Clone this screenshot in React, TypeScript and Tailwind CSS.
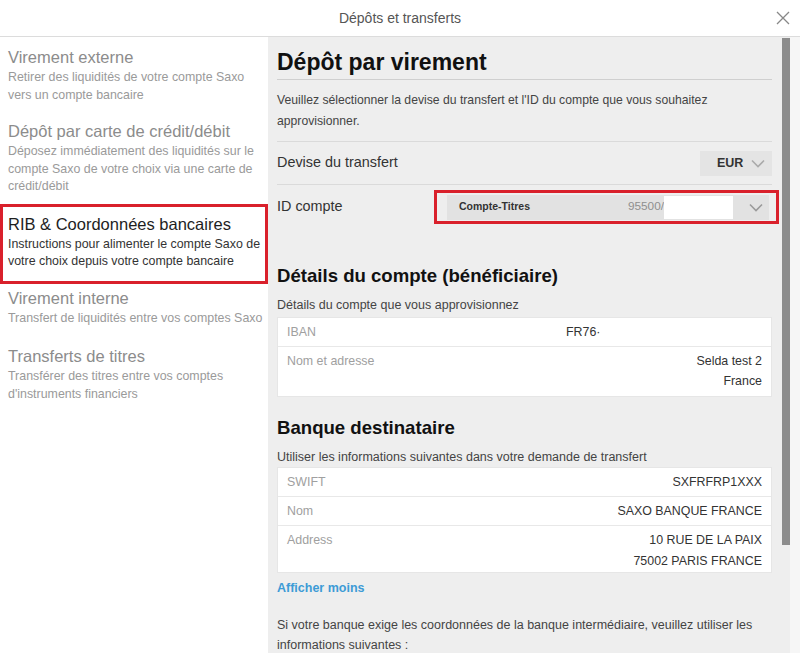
import React from "react";

const font = { fontFamily: '"Liberation Sans", Arial, Helvetica, sans-serif' };

function Chevron({ className = "" }: { className?: string }) {
  return (
    <svg width="14" height="9" viewBox="0 0 14 9" className={className}>
      <path d="M1 1.5 L7 7.5 L13 1.5" fill="none" stroke="currentColor" strokeWidth="1.6" />
    </svg>
  );
}

type Item = { title: string; desc: string[]; active?: boolean; cls: string };

const items: Item[] = [
  { title: "Virement externe", desc: ["Retirer des liquidités de votre compte Saxo", "vers un compte bancaire"], cls: "pt-[8px] pb-[8px]" },
  {
    title: "Dépôt par carte de crédit/débit",
    desc: ["Déposez immédiatement des liquidités sur le", "compte Saxo de votre choix via une carte de", "crédit/débit"],
    cls: "pt-[7px] pb-[8px]",
  },
  {
    title: "RIB & Coordonnées bancaires",
    desc: ["Instructions pour alimenter le compte Saxo de", "votre choix depuis votre compte bancaire"],
    active: true,
    cls: "pt-[5px] pb-[10px] border-[3px] border-[#d9202b] pl-[5px]",
  },
  { title: "Virement interne", desc: ["Transfert de liquidités entre vos comptes Saxo"], cls: "pt-[2px] pb-[8px]" },
  { title: "Transferts de titres", desc: ["Transférer des titres entre vos comptes", "d'instruments financiers"], cls: "pt-[9px] pb-[8px]" },
];

function Sidebar() {
  return (
    <div className="w-[268px] shrink-0 bg-white">
      {items.map((it) => (
        <div key={it.title} className={`${it.active ? "" : "pl-[8px]"} ${it.cls}`}>
          <div className={`whitespace-nowrap text-[16.5px] leading-[24px] ${it.active ? "text-[#1e1e1e]" : "text-[#8c8c8c]"}`}>{it.title}</div>
          <div className={`whitespace-nowrap text-[12.4px] leading-[17.5px] ${it.active ? "text-[#333]" : "text-[#9a9a9a]"}`}>
            {it.desc.map((d) => (
              <div key={d}>{d}</div>
            ))}
          </div>
        </div>
      ))}
    </div>
  );
}

function Row({
  label,
  values,
  last,
  mid,
  pb = "pb-[4px]",
  lh = "leading-[20px]",
}: {
  label: string;
  values: string[];
  last?: boolean;
  mid?: boolean;
  pb?: string;
  lh?: string;
}) {
  return (
    <div className={`flex px-[9px] pt-[4px] ${pb} text-[12.4px] ${lh} ${last ? "" : "border-b border-[#e8e8e8]"}`}>
      <div className={`text-[#a0a0a0] ${mid ? "w-[279px]" : "flex-1"}`}>{label}</div>
      <div className={`text-[#333] ${mid ? "" : "text-right"}`}>
        {values.map((v) => (
          <div key={v}>{v}</div>
        ))}
      </div>
    </div>
  );
}

function Main() {
  return (
    <div className="flex-1 flex bg-[#eeeeee]">
      <div className="w-[514px] pl-[9px] pr-[10px] pt-[11px]">
        <h2 className="text-[23px] leading-[28px] font-bold text-[#111] pb-[3px] border-b border-[#cfcfcf]">Dépôt par virement</h2>
        <p className="mt-[10px] pb-[9px] text-[12.2px] leading-[21px] text-[#444] border-b border-[#dadada]">
          Veuillez sélectionner la devise du transfert et l'ID du compte que vous souhaitez
          <br />
          approvisionner.
        </p>
        <div className="h-[43px] flex items-center justify-between border-b border-[#dadada]">
          <span className="text-[14.4px] text-[#333]">Devise du transfert</span>
          <div className="w-[72px] h-[25px] bg-[#e4e4e4] flex items-center pl-[17px] gap-[8px]">
            <span className="text-[12.5px] font-bold text-[#333]">EUR</span>
            <Chevron className="text-[#aaa]" />
          </div>
        </div>
        <div className="h-[44px] flex items-center">
          <span className="text-[14.4px] text-[#333] w-[157px]">ID compte</span>
          <div className="mr-[-7px] w-[345px] h-[34px] border-[3px] border-[#d9202b] flex items-center pl-[10px] pr-[7px]">
            <div className="flex-1 h-[25px] bg-[#e2e2e2] flex items-center">
              <span className="pl-[12px] flex-1 text-[10.5px] font-bold text-[#333]">Compte-Titres</span>
              <span className="whitespace-nowrap text-[11.8px] text-[#8f8f8f]">95500/</span>
              <span className="w-[69px] h-[23px] bg-white" />
              <Chevron className="ml-[16px] mr-[6px] text-[#9a9a9a]" />
            </div>
          </div>
        </div>

        <h3 className="mt-[35px] text-[18.6px] leading-[24px] font-bold text-[#111]">Détails du compte (bénéficiaire)</h3>
        <div className="mt-[8px] text-[12.5px] leading-[18px] text-[#444]">Détails du compte que vous approvisionnez</div>
        <div className="mt-[3px] bg-white border border-[#e6e6e6]">
          <Row label="IBAN" values={["FR76·"]} mid />
          <Row label="Nom et adresse" values={["Selda test 2", "France"]} last pb="pb-[5px]" />
        </div>

        <h3 className="mt-[19px] text-[18.6px] leading-[24px] font-bold text-[#111]">Banque destinataire</h3>
        <div className="mt-[8px] text-[12.5px] leading-[18px] text-[#444]">Utiliser les informations suivantes dans votre demande de transfert</div>
        <div className="mt-[1px] bg-white border border-[#e6e6e6]">
          <Row label="SWIFT" values={["SXFRFRP1XXX"]} />
          <Row label="Nom" values={["SAXO BANQUE FRANCE"]} />
          <Row label="Address" values={["10 RUE DE LA PAIX", "75002 PARIS FRANCE"]} last pb="pb-[0px]" lh="leading-[21px]" />
        </div>
        <div className="mt-[6px] text-[12.5px] leading-[18px] font-bold text-[#3d9bd6]">Afficher moins</div>
        <p className="mt-[18px] text-[12.5px] leading-[20px] text-[#444]">
          Si votre banque exige les coordonnées de la banque intermédiaire, veuillez utiliser les
          <br />
          informations suivantes :
        </p>
      </div>
      <div className="w-[8px] flex flex-col">
        <div className="h-[507px] bg-[#8c8c8c] mt-[1px]" />
      </div>
      <div className="flex-1 bg-[#f6f6f6]" />
    </div>
  );
}

export default function App() {
  return (
    <div className="w-[800px] h-[653px] overflow-hidden bg-white flex flex-col" style={font}>
      <div className="h-[37px] shrink-0 border-b border-[#dcdcdc] relative flex items-center justify-center">
        <span className="text-[14px] text-[#555]">Dépôts et transferts</span>
        <svg width="14" height="14" viewBox="0 0 14 14" className="absolute right-[10px] top-[11px] text-[#888]">
          <path d="M1 1 L13 13 M13 1 L1 13" stroke="currentColor" strokeWidth="1.3" />
        </svg>
      </div>
      <div className="flex flex-1 overflow-hidden">
        <Sidebar />
        <Main />
      </div>
    </div>
  );
}
